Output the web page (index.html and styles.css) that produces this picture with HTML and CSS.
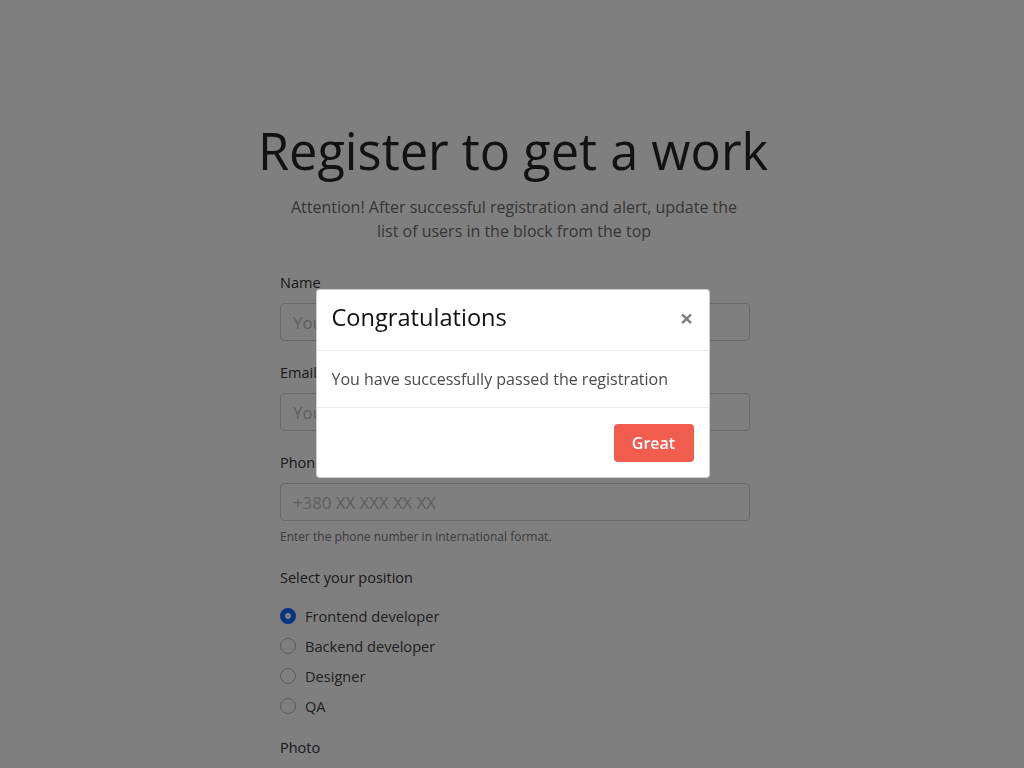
FILE: index.html
```html
<!DOCTYPE html>
<html lang="en">
<head>
<meta charset="utf-8">
<title>Register to get a work</title>
<link rel="stylesheet" href="styles.css">
</head>
<body>
<main class="page">
  <h1 class="title">Register to get a work</h1>
  <p class="subtitle">Attention! After successful registration and alert, update the list of users in the block from the top</p>
  <form class="form">
    <div class="group">
      <label class="label" for="name">Name</label>
      <input class="input" id="name" type="text" placeholder="Your name">
    </div>
    <div class="group">
      <label class="label" for="email">Email</label>
      <input class="input" id="email" type="email" placeholder="Your email">
    </div>
    <div class="group">
      <label class="label" for="phone">Phone number</label>
      <input class="input" id="phone" type="tel" placeholder="+380 XX XXX XX XX">
      <div class="help">Enter the phone number in international format.</div>
    </div>
    <div class="group">
      <div class="label">Select your position</div>
      <div class="radios">
        <label class="radio"><input type="radio" name="pos" checked><span>Frontend developer</span></label>
        <label class="radio"><input type="radio" name="pos"><span>Backend developer</span></label>
        <label class="radio"><input type="radio" name="pos"><span>Designer</span></label>
        <label class="radio"><input type="radio" name="pos"><span>QA</span></label>
      </div>
    </div>
    <div class="group">
      <div class="label">Photo</div>
      <div class="input file"></div>
    </div>
  </form>
</main>
<div class="backdrop">
  <div class="modal">
    <div class="modal-header">
      <h4 class="modal-title">Congratulations</h4>
      <button class="close" type="button">&times;</button>
    </div>
    <div class="modal-body">You have successfully passed the registration</div>
    <div class="modal-footer">
      <button class="btn" type="button">Great</button>
    </div>
  </div>
</div>
</body>
</html>
```

FILE: styles.css
```css
* { box-sizing: border-box; }
html, body { margin: 0; height: 100%; }
body {
  font-family: "Open Sans", "DejaVu Sans", sans-serif;
  color: #212529;
  background: #fff;
  overflow: hidden;
  padding-left: 6px;
}
.page {
  width: 470px;
  margin: 0 auto;
  padding-top: 121px;
}
.title {
  margin: 0 -100px 0 -104px;
  font-size: 50.5px;
  line-height: 60px;
  font-weight: 400;
  text-align: center;
  color: #212529;
}
.subtitle {
  margin: 14px 0 0;
  font-size: 16px;
  line-height: 24px;
  text-align: center;
  color: #6c6c6c;
  padding: 0 8px 0 6px;
}
.form {
  margin-top: 28px;
  display: flex;
  flex-direction: column;
  gap: 20px;
}
.group { display: flex; flex-direction: column; }
.label {
  font-size: 14.5px;
  line-height: 24px;
  color: #333;
  margin-bottom: 8px;
}
.input {
  height: 38px;
  border: 1px solid #ced4da;
  border-radius: 4px;
  padding: 0 12px;
  font: inherit;
  font-size: 16.8px;
  color: #495057;
  background: #fff;
}
.input::placeholder { color: #bdbdbd; }
.help {
  margin-top: 7px;
  font-size: 12px;
  line-height: 18px;
  color: #777;
}
.radios {
  display: flex;
  flex-direction: column;
  margin-top: 3px;
  margin-bottom: -5px;
}
.radio {
  display: flex;
  align-items: center;
  gap: 9px;
  height: 30px;
  font-size: 14.6px;
  color: #444;
}
.radio input {
  appearance: none;
  -webkit-appearance: none;
  margin: 0;
  width: 16px;
  height: 16px;
  border-radius: 50%;
  border: 1px solid #b5b5b5;
  background: #fff;
  flex: none;
}
.radio input:checked {
  border: 5px solid #0a6cff;
  background: #fff;
}
.backdrop {
  position: fixed;
  inset: 0;
  background: rgba(0, 0, 0, 0.5);
  display: flex;
  align-items: center;
  justify-content: center;
  padding-left: 1px;
}
.modal {
  width: 394px;
  background: #fff;
  border: 1px solid rgba(0, 0, 0, 0.2);
  border-radius: 4px;
  margin-bottom: 2px;
}
.modal-header {
  display: flex;
  align-items: flex-start;
  justify-content: space-between;
  padding: 13px 15px 18px 15px;
  border-bottom: 1px solid #e9ecef;
}
.modal-title {
  margin: 0;
  font-size: 23.6px;
  line-height: 29px;
  font-weight: 400;
  color: #111;
}
.close {
  border: 0;
  background: none;
  padding: 0;
  margin-top: 3px;
  font-family: "Open Sans", sans-serif;
  font-size: 24px;
  line-height: 24px;
  font-weight: 700;
  color: #000;
  opacity: 0.5;
}
.modal-body {
  padding: 16px 15px;
  font-size: 16px;
  line-height: 24px;
  color: #4a4a4a;
  border-bottom: 1px solid #e9ecef;
}
.modal-footer {
  display: flex;
  justify-content: flex-end;
  padding: 16px 15px 15px;
}
.btn {
  height: 38px;
  width: 80px;
  border: 0;
  border-radius: 4px;
  background: #f05c4d;
  color: #fff;
  font-family: "Open Sans", sans-serif;
  font-size: 16px;
  font-weight: 600;
  padding: 0;
}
```
